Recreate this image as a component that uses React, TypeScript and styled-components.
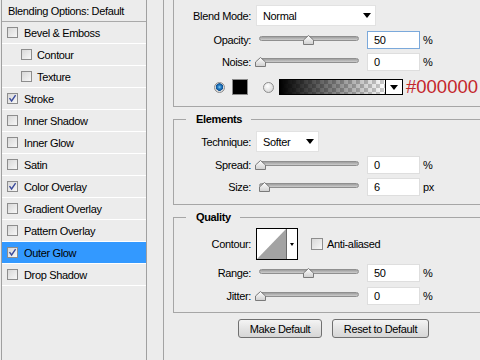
import styled, { createGlobalStyle } from "styled-components";

const GlobalStyle = createGlobalStyle`
  html, body {
    margin: 0;
    padding: 0;
  }
  body {
    background: #ececec;
    font-family: "Liberation Sans", Arial, sans-serif;
    font-size: 11px;
    letter-spacing: -0.35px;
    color: #000;
    overflow: hidden;
  }
`;

interface Effect {
  name: string;
  checked?: boolean;
  indent?: boolean;
  selected?: boolean;
}

const effects: Effect[] = [
  { name: "Bevel & Emboss" },
  { name: "Contour", indent: true },
  { name: "Texture", indent: true },
  { name: "Stroke", checked: true },
  { name: "Inner Shadow" },
  { name: "Inner Glow" },
  { name: "Satin" },
  { name: "Color Overlay", checked: true },
  { name: "Gradient Overlay" },
  { name: "Pattern Overlay" },
  { name: "Outer Glow", checked: true, selected: true },
  { name: "Drop Shadow" },
];

const Checkbox = ({ checked }: { checked?: boolean }) => (
  <Box>
    {checked && (
      <svg width="9" height="9" viewBox="0 0 9 9">
        <path d="M1.5 4.2 L3.6 7 L7.6 1.2" fill="none" stroke="#3a4a9c" strokeWidth="1.4" />
      </svg>
    )}
  </Box>
);

const Slider = ({ value }: { value: number }) => (
  <SliderWrap>
    <Track />
    <Thumb style={{ left: `${-1.5 + value * 96}px` }}>
      <svg width="11" height="10" viewBox="0 0 11 10">
        <defs>
          <linearGradient id="thumbFill" x1="0" y1="0" x2="0" y2="1">
            <stop offset="0" stopColor="#ffffff" />
            <stop offset="1" stopColor="#cfcfcf" />
          </linearGradient>
        </defs>
        <polygon points="5.5,0.5 10.5,5 10.5,9.5 0.5,9.5 0.5,5" fill="url(#thumbFill)" stroke="#7a7a7a" />
      </svg>
    </Thumb>
  </SliderWrap>
);

const SliderRow = ({
  label,
  value,
  text,
  unit,
  focus,
  mt,
}: {
  label: string;
  value: number;
  text: string;
  unit: string;
  focus?: boolean;
  mt: number;
}) => (
  <Row $mt={mt} $h={18}>
    <Label>{label}</Label>
    <Slider value={value} />
    <NumberField $focus={focus}>{text}</NumberField>
    <Unit>{unit}</Unit>
  </Row>
);

const App = () => {
  return (
    <>
      <GlobalStyle />
      <Page>
        <Sidebar>
          <SidebarHeader>Blending Options: Default</SidebarHeader>
          {effects.map((e) => (
            <EffectRow key={e.name} $indent={e.indent} $selected={e.selected}>
              <Checkbox checked={e.checked} />
              <EffectName $indent={e.indent}>{e.name}</EffectName>
            </EffectRow>
          ))}
        </Sidebar>
        <Divider />
        <Main>
          <Group $mt={0} $pb={11} $open>
            <Row $mt={5} $h={21}>
              <Label>Blend Mode:</Label>
              <Select $w={120}>
                Normal
                <Caret />
              </Select>
            </Row>
            <SliderRow label="Opacity:" value={0.5} text="50" unit="%" focus mt={5} />
            <SliderRow label="Noise:" value={0} text="0" unit="%" mt={4} />
            <ColorRow>
              <Radio $on />
              <Swatch />
              <Radio />
              <GradientPicker>
                <GradientPreview />
                <GradientArrow>
                  <Caret />
                </GradientArrow>
              </GradientPicker>
              <Hex>#000000</Hex>
            </ColorRow>
          </Group>

          <Group $mt={6} $pb={8}>
            <Legend>Elements</Legend>
            <Row $mt={5} $h={21}>
              <Label>Technique:</Label>
              <Select $w={63}>
                Softer
                <Caret />
              </Select>
            </Row>
            <SliderRow label="Spread:" value={0} text="0" unit="%" mt={4} />
            <SliderRow label="Size:" value={0.05} text="6" unit="px" mt={4} />
          </Group>

          <Group $mt={6} $pb={7}>
            <Legend>Quality</Legend>
            <Row $mt={4} $h={32}>
              <Label>Contour:</Label>
              <ContourPicker>
                <svg width="29" height="30" viewBox="0 0 29 30">
                  <rect x="0" y="0" width="29" height="30" fill="#fff" />
                  <polygon points="0,30 29,0 29,30" fill="#a3a3a3" />
                </svg>
                <ContourArrow>
                  <SmallCaret />
                </ContourArrow>
              </ContourPicker>
              <AntiAlias>
                <Checkbox />
                <span>Anti-aliased</span>
              </AntiAlias>
            </Row>
            <SliderRow label="Range:" value={0.5} text="50" unit="%" mt={4} />
            <SliderRow label="Jitter:" value={0} text="0" unit="%" mt={5} />
          </Group>

          <ButtonRow>
            <Button $w={84}>Make Default</Button>
            <Button $w={97}>Reset to Default</Button>
          </ButtonRow>
        </Main>
      </Page>
    </>
  );
};

export default App;

const Page = styled.div`
  display: flex;
  width: 480px;
  height: 360px;
  overflow: hidden;
`;

const Sidebar = styled.div`
  flex: none;
  width: 146px;
  margin-left: 1px;
  box-sizing: border-box;
  border-left: 1px solid #a0a0a0;
  border-right: 1px solid #a0a0a0;
  background: #ececec;
`;

const SidebarHeader = styled.div`
  height: 22px;
  box-sizing: border-box;
  border-bottom: 1px solid #a9a9a9;
  padding-left: 6px;
  display: flex;
  align-items: center;
`;

const EffectRow = styled.div<{ $indent?: boolean; $selected?: boolean }>`
  height: 22px;
  box-sizing: border-box;
  border-bottom: 1px solid #ffffff;
  display: flex;
  align-items: center;
  padding-left: ${(p) => (p.$indent ? 19 : 5)}px;
  background: ${(p) => (p.$selected ? "#3399ff" : "transparent")};
`;

const EffectName = styled.span<{ $indent?: boolean }>`
  margin-left: ${(p) => (p.$indent ? 5 : 6)}px;
`;

const Box = styled.span`
  flex: none;
  width: 11px;
  height: 11px;
  box-sizing: border-box;
  border: 1px solid #8d8d8d;
  background: linear-gradient(135deg, #d8d8d8, #f7f7f7);
  display: inline-flex;
  align-items: center;
  justify-content: center;
`;

const Divider = styled.div`
  flex: none;
  width: 1px;
  margin-left: 16px;
  background: #a3a3a3;
`;

const Main = styled.div`
  flex: 1;
  min-width: 0;
  padding-left: 9px;
`;

const Group = styled.fieldset<{ $mt: number; $pb: number; $open?: boolean }>`
  margin: ${(p) => p.$mt}px -12px 0 0;
  padding: 0 0 ${(p) => p.$pb}px 0;
  min-width: 0;
  border: 1px solid #a6a6a6;
  border-top: ${(p) => (p.$open ? "none" : "1px solid #a6a6a6")};
`;

const Legend = styled.legend`
  margin-left: 12px;
  padding: 0 9px 0 10px;
  font-weight: bold;
  line-height: 13px;
`;

const Row = styled.div<{ $mt: number; $h: number }>`
  display: flex;
  align-items: center;
  margin-top: ${(p) => p.$mt}px;
  height: ${(p) => p.$h}px;
`;

const Label = styled.span`
  flex: none;
  width: 82px;
  box-sizing: border-box;
  padding-right: 5px;
  text-align: right;
`;

const Select = styled.div<{ $w: number }>`
  flex: none;
  width: ${(p) => p.$w}px;
  height: 21px;
  box-sizing: border-box;
  background: #fff;
  border: 1px solid #e2e2e2;
  padding: 0 4px 0 6px;
  display: flex;
  align-items: center;
  justify-content: space-between;
`;

const Caret = styled.span`
  width: 0;
  height: 0;
  border-left: 4px solid transparent;
  border-right: 4px solid transparent;
  border-top: 5px solid #000;
`;

const SmallCaret = styled.span`
  width: 0;
  height: 0;
  border-left: 2.5px solid transparent;
  border-right: 2.5px solid transparent;
  border-top: 3px solid #000;
`;

const SliderWrap = styled.div`
  position: relative;
  flex: none;
  width: 105px;
  height: 18px;
`;

const Track = styled.div`
  position: absolute;
  left: 3px;
  top: 5px;
  width: 100px;
  height: 5px;
  box-sizing: border-box;
  border-radius: 3px;
  border: 1px solid #8f8f8f;
  background: linear-gradient(#9e9e9e, #cdcdcd);
`;

const Thumb = styled.div`
  position: absolute;
  top: 4px;
  width: 11px;
  height: 10px;
  display: flex;
`;

const NumberField = styled.div<{ $focus?: boolean }>`
  flex: none;
  margin-left: 6px;
  width: 53px;
  height: 18px;
  box-sizing: border-box;
  background: #fff;
  border: 1px solid ${(p) => (p.$focus ? "#7ba9db" : "#dedede")};
  padding-left: 6px;
  display: flex;
  align-items: center;
`;

const Unit = styled.span`
  margin-left: 3px;
`;

const ColorRow = styled.div`
  display: flex;
  align-items: center;
  height: 16px;
  margin-top: 8px;
  padding-left: 40px;
`;

const Radio = styled.span<{ $on?: boolean }>`
  flex: none;
  width: 11px;
  height: 11px;
  box-sizing: border-box;
  border-radius: 50%;
  border: 1px solid #8c8c8c;
  background: ${(p) =>
    p.$on
      ? "radial-gradient(circle at 50% 45%, #8fd0f5 0, #2c86cc 1.5px, #0d4f92 3.5px, #dcdcdc 4px)"
      : "radial-gradient(circle at 40% 35%, #ffffff, #cdcdcd)"};
  margin-right: ${(p) => (p.$on ? 7 : 5)}px;
`;

const Swatch = styled.span`
  flex: none;
  width: 16px;
  height: 16px;
  box-sizing: border-box;
  background: #000;
  border: 1px solid #8a8a8a;
  margin-right: 15px;
`;

const GradientPicker = styled.div`
  flex: none;
  display: flex;
  width: 124px;
  height: 16px;
  box-sizing: border-box;
  border: 1px solid #000;
`;

const GradientPreview = styled.div`
  flex: 1;
  background: linear-gradient(to right, #000, rgba(0, 0, 0, 0)),
    repeating-conic-gradient(#cdcdcd 0 25%, #ffffff 0 50%) 0 0 / 8px 8px;
`;

const GradientArrow = styled.div`
  flex: none;
  width: 16px;
  border-left: 1px solid #000;
  background: #fff;
  display: flex;
  align-items: center;
  justify-content: center;
`;

const Hex = styled.span`
  margin-left: 3px;
  font-size: 18.5px;
  letter-spacing: 0;
  line-height: 1;
  color: #c4262b;
`;

const ContourPicker = styled.div`
  flex: none;
  display: flex;
  width: 42px;
  height: 32px;
  box-sizing: border-box;
  border: 1px solid #000;
  background: #fff;
`;

const ContourArrow = styled.div`
  flex: 1;
  border-left: 1px solid #6a6a6a;
  display: flex;
  align-items: center;
  justify-content: center;
`;

const AntiAlias = styled.div`
  display: flex;
  align-items: center;
  gap: 4px;
  margin-left: 13px;
  & > span:first-child {
    width: 12px;
    height: 12px;
  }
`;

const ButtonRow = styled.div`
  display: flex;
  gap: 10px;
  margin-top: 6px;
  padding-left: 65px;
`;

const Button = styled.button<{ $w: number }>`
  width: ${(p) => p.$w}px;
  height: 19px;
  padding: 0;
  border: 1px solid #707070;
  border-radius: 3px;
  background: linear-gradient(#f4f4f4, #e4e4e4 50%, #d6d6d6);
  font-family: "Liberation Sans", Arial, sans-serif;
  font-size: 11px;
  letter-spacing: -0.35px;
  color: #000;
`;
